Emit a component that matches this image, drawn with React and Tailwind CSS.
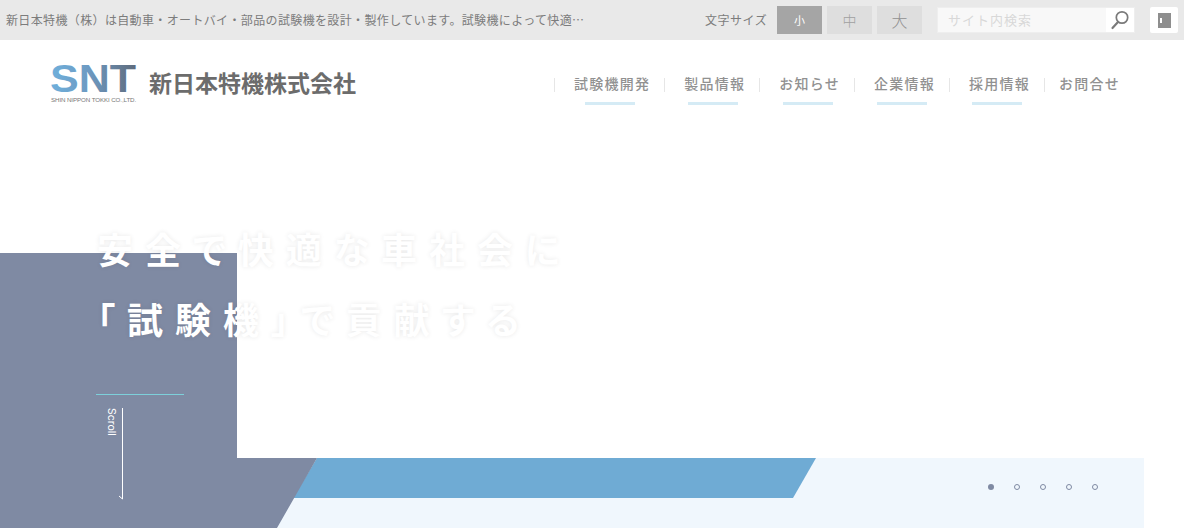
import React from "react";

const navItems = [
  { label: "試験機開発", bar: true, pl: "ml-[19px]", pr: "mr-[14px]" },
  { label: "製品情報", bar: true, pl: "ml-[19px]", pr: "mr-[14px]" },
  { label: "お知らせ", bar: true, pl: "ml-[19px]", pr: "mr-[14px]" },
  { label: "企業情報", bar: true, pl: "ml-[19px]", pr: "mr-[14px]" },
  { label: "採用情報", bar: true, pl: "ml-[19px]", pr: "mr-[14px]" },
  { label: "お問合せ", bar: false, pl: "ml-[14px]", pr: "mr-0" },
];

function Logo() {
  return (
    <div className="w-[88px] shrink-0 flex flex-col">
      <svg width="88" height="44" viewBox="0 0 88 44" className="-mt-[8px] -mb-[6px] overflow-visible">
        <defs>
          <linearGradient id="snt" x1="0" y1="0" x2="1" y2="0">
            <stop offset="0" stopColor="#6fb0dc" />
            <stop offset="0.45" stopColor="#6d9ac2" />
            <stop offset="1" stopColor="#5f6b7c" />
          </linearGradient>
        </defs>
        <text x="-1" y="34" fontFamily="'Liberation Sans', sans-serif" fontWeight="700" fontSize="38" textLength="86" lengthAdjust="spacingAndGlyphs" fill="url(#snt)">SNT</text>
      </svg>
      <span className="text-[6.2px] leading-[8px] tracking-[-0.1px] text-[#777777] whitespace-nowrap font-['Liberation_Sans',sans-serif]">SHIN NIPPON TOKKI CO.,LTD.</span>
    </div>
  );
}

function TopBar() {
  return (
    <div className="h-10 bg-[#e9e9e9] flex items-center pl-[6px] pr-[6px]">
      <p className="w-[690px] text-[12px] tracking-[0.36px] text-[#7c7c7c] whitespace-nowrap">新日本特機（株）は自動車・オートバイ・部品の試験機を設計・製作しています。試験機によって快適…</p>
      <span className="ml-[9px] w-[72px] text-[12px] tracking-[0.5px] text-[#7c7c7c] whitespace-nowrap">文字サイズ</span>
      <div className="flex gap-[5px]">
        <button className="w-[45px] h-7 bg-[#a5a5a5] text-white text-[11px]">小</button>
        <button className="w-[45px] h-7 bg-[#dedede] text-[#a0a0a0] text-[14px] font-light">中</button>
        <button className="w-[45px] h-7 bg-[#dedede] text-[#909090] text-[16px] font-light">大</button>
      </div>
      <div className="ml-[15px] w-[198px] h-[26px] bg-[#f8f8f8] border border-[#eeeeee] flex items-center justify-between">
        <span className="ml-[10px] -mt-px text-[13px] tracking-[1px] text-[#d8d8d8]">サイト内検索</span>
        <span className="w-7 h-full bg-white flex items-center justify-center">
          <svg width="20" height="20" viewBox="0 0 20 20" fill="none" stroke="#7a7a7a">
            <circle cx="12" cy="7.5" r="5.7" strokeWidth="1.7" />
            <path d="M8 12 L2.5 18" strokeWidth="2.2" strokeLinecap="round" />
          </svg>
        </span>
      </div>
      <button className="ml-[15px] w-[28px] h-[26px] bg-white rounded-[2px] flex items-center justify-center">
        <span className="w-[13px] h-[15px] bg-[#8e8e8e] flex items-center pl-[2px]">
          <span className="w-[2px] h-[5px] bg-white" />
        </span>
      </button>
    </div>
  );
}

function Header() {
  return (
    <header className="h-[88px] flex items-start pl-[51px]">
      <div className="mt-[26px] flex items-start gap-[10px]">
        <Logo />
        <span className="text-[23px] leading-[32px] font-bold text-[#6c6c6c] whitespace-nowrap">新日本特機株式会社</span>
      </div>
      <nav className="ml-[198px] mt-[36px] flex items-start">
        {navItems.map((n) => (
          <div key={n.label} className="flex items-start">
            <span className="w-px h-[14px] mt-[2px] bg-[#e6e6e6]" />
            <div className={`-mt-[2px] flex flex-col items-center w-fit ${n.pl} ${n.pr}`}>
              <span className="text-[14px] leading-[18px] font-medium tracking-[1.25px] text-[#919191] whitespace-nowrap">{n.label}</span>
              {n.bar && <span className="mt-[10px] w-[50px] h-[3px] bg-[#d5ebf5] -translate-x-0.5" />}
            </div>
          </div>
        ))}
      </nav>
    </header>
  );
}

function Hero() {
  return (
    <section className="flex-1 grid grid-cols-1 grid-rows-1">
      <div className="col-start-1 row-start-1 self-end ml-[237px] mr-[40px] h-[70px] bg-[#f0f7fd] flex items-start">
        <div className="ml-[40px] w-[539px] h-10 bg-[#6fabd4] [clip-path:polygon(40px_0,539px_0,516px_40px,16px_40px)]" />
        <div className="ml-[172px] mt-[26px] flex items-center gap-5">
          <span className="w-[6px] h-[6px] rounded-full bg-[#7f8aa3]" />
          <span className="w-[6px] h-[6px] rounded-full border border-[#7f8aa3]" />
          <span className="w-[6px] h-[6px] rounded-full border border-[#7f8aa3]" />
          <span className="w-[6px] h-[6px] rounded-full border border-[#7f8aa3]" />
          <span className="w-[6px] h-[6px] rounded-full border border-[#7f8aa3]" />
        </div>
      </div>
      <div className="col-start-1 row-start-1 self-end w-[317px] h-[275px] bg-[#7f8aa3] [clip-path:polygon(0_0,237px_0,237px_205px,317px_205px,277px_275px,0_275px)]" />
      <div className="relative z-10 col-start-1 row-start-1 pl-[97px] pt-[85px] flex flex-col items-start">
        <h1 className="text-[36px] leading-[70px] font-bold tracking-[12px] text-white whitespace-nowrap [font-feature-settings:'palt'] [text-shadow:0_0_5px_rgba(0,0,0,0.09)]">
          安全で快適な車社会に<br />
          「試験機」で貢献する
        </h1>
        <div className="mt-[41px] -ml-px w-[88px] h-px bg-[#7dd0da]" />
        <div className="mt-[13px] ml-[8px] flex items-start">
          <span className="[writing-mode:vertical-rl] text-[10.5px] leading-[12px] text-white font-['Inter',sans-serif]">Scroll</span>
          <svg width="8" height="92" viewBox="0 0 8 92" fill="none" stroke="#fff">
            <path d="M5.5 0 V91 L2 88" strokeWidth="1" />
          </svg>
        </div>
      </div>
    </section>
  );
}

export default function App() {
  return (
    <div className="w-[1184px] h-[528px] overflow-hidden bg-white flex flex-col font-['Noto_Sans_CJK_JP','Noto_Sans',sans-serif]">
      <TopBar />
      <Header />
      <Hero />
    </div>
  );
}
